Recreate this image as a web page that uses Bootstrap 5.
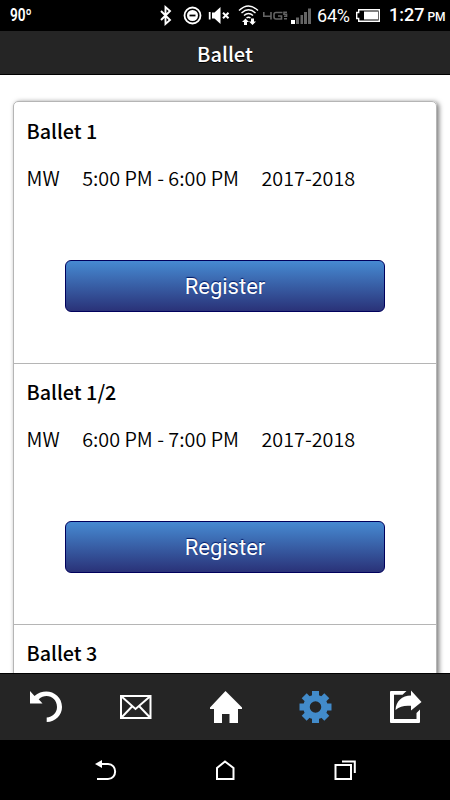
<!DOCTYPE html>
<html lang="en">
<head>
<meta charset="utf-8">
<meta name="viewport" content="width=device-width, initial-scale=1">
<title>Ballet</title>
<link href="https://cdn.jsdelivr.net/npm/bootstrap@5.3.0/dist/css/bootstrap.min.css" rel="stylesheet">
<style>
body{height:800px;font-family:"Noto Sans CJK JP","Noto Sans CJK SC",sans-serif;color:#000;background:#fff}
.status{height:31px;background:#000;color:#fff;font-family:Roboto,sans-serif;padding:0 6px 0 10px}
.status svg{display:block;flex:none}
.temp{font-size:17.5px;font-weight:600;width:24px;line-height:33px}
.temp span{display:inline-block;transform:scaleX(.78);transform-origin:left}
.pct{font-size:18px;line-height:33px;width:38px;letter-spacing:-.2px}
.clock{font-size:18px;line-height:35px;font-weight:500;width:55px;white-space:nowrap}
.clock small{font-size:12px;margin-left:3px}
.titlebar{height:44px;background:#252525;border-bottom:1px solid #000;color:#fff;font-size:20px;font-weight:500;line-height:1;text-shadow:0 1px 0 #000}
.titlebar span{padding-top:3px}
.content-area{height:598px;padding:26px 13px 0 13px}
.class-list{border:1px solid #b5b5b5;border-radius:5px;box-shadow:2px 1px 5px #777;height:700px}
.class-item{height:261px;padding:12px 12.5px 0;border-bottom:1px solid #b5b5b5}
.class-item:first-child{height:262px;padding-top:13px}
.class-item h2{font-size:19.8px;font-weight:500;line-height:32px;margin:0 0 15px}
.meta{font-size:19.8px;font-weight:350;line-height:32px;gap:22.500px;white-space:nowrap}
.btn-register{width:320px;height:52px;margin-top:66px;border:1px solid #00005c;border-radius:6px;background:linear-gradient(#468ad2,#2a3278);color:#fff;font:400 22px/48px Roboto,sans-serif;padding:1px 0 0;text-shadow:0 -1px 1px #001a66}
.toolbar{height:67px;background:#252525;border-top:1px solid #000}
.sysbar{height:60px;background:#000}
.toolbar svg,.sysbar svg{display:block}
</style>
<script src="https://cdn.jsdelivr.net/npm/bootstrap@5.3.0/dist/js/bootstrap.bundle.min.js"></script>
</head>
<body class="d-flex flex-column overflow-hidden">
<div class="status d-flex align-items-center flex-shrink-0">
<div class="temp"><span>90º</span></div>
<svg class="ms-auto" width="155" height="31" viewBox="157 0 155 31" fill="none" stroke="#fff">
<path d="M160 11l9 9-4.500 4V7l4.500 4-9 9" stroke-width="1.900"/>
<circle cx="191.500" cy="15.500" r="8" stroke-width="1.800"/><circle cx="191.500" cy="15.500" r="5.500" fill="#fff" stroke="none"/><path d="M188.500 15.500h6" stroke="#000" stroke-width="1.800"/>
<path d="M208.700 12v7.500" stroke-width="1.800"/><path d="M211 12.500h2.500l6-5.500v17l-6-5.500H211z" fill="#fff" stroke="none"/><path d="M222 12.800l5.500 5.500m0-5.500l-5.500 5.500" stroke-width="2"/>
<path d="M238 10.500q9.500-9 19 0M240.500 13q7-6.500 14 0M243 15.500q4.500-4 9 0M245.500 18q2-1.600 4 0" stroke-width="1.400"/>
<path d="M241 22l3.500-3.500 3.500 3.500h-2v3h-3v-3zM248 21.500h2v-3h3v3h2l-3.500 3.500z" fill="#fff" stroke="none"/>
<path d="M262.800 12v4.300h7.700M270 12v7.500M281.500 12.500H275q-2 0-2 2v2.500q0 2 2 2h5.500v-3H277M286 12.300h-3v2h2.500v2h-2.500M286 18.800h-3" stroke="#646464" stroke-width="1.600"/>
<path d="M290 20h4v4h-4z" fill="#fff" stroke="none"/><path d="M295 17.500h3v6.500h-3zM299.500 15h2.500v9h-2.500zM303 12h3v12h-3zM307 8.500h3V24h-3z" fill="#646464" stroke="none"/>
</svg>
<div class="pct ms-1"><span>64%</span></div>
<svg width="26" height="31" viewBox="354 0 26 31"><path d="M357.700 9.700h20.600v11.600h-20.600v-2.800h-2v-6h2z" fill="none" stroke="#fff" stroke-width="1.400"/><path d="M363 11.500h14v8h-14z" fill="#fff"/></svg>
<div class="clock ms-2">1:27<small>PM</small></div>
</div>
<header class="titlebar d-flex justify-content-center align-items-center flex-shrink-0"><span>Ballet</span></header>
<main class="content-area overflow-hidden flex-shrink-0">
<div class="class-list">
<section class="class-item"><h2>Ballet 1</h2><div class="meta d-flex"><span>MW</span><span>5:00 PM - 6:00 PM</span><span>2017-2018</span></div><div class="text-center"><button class="btn btn-register">Register</button></div></section>
<section class="class-item"><h2>Ballet 1/2</h2><div class="meta d-flex"><span>MW</span><span>6:00 PM - 7:00 PM</span><span>2017-2018</span></div><div class="text-center"><button class="btn btn-register">Register</button></div></section>
<section class="class-item border-0"><h2>Ballet 3</h2></section>
</div>
</main>
<nav class="toolbar row g-0 flex-shrink-0" aria-label="Tools">
<div class="col"><svg width="90" height="66" viewBox="0 674 90 66"><path d="M30 691v12.500h12.500l-3.800-4.200C46 692.500 57 697 57 707c0 6-4.500 10-10.300 10.500v4.500C55.500 722 62 715 62 707c0-14.500-17-20.500-27.500-11z" fill="#fff"/></svg></div>
<div class="col"><svg width="90" height="66" viewBox="90 674 90 66"><path d="M121 696h29.500v22H121zM121 696l14.500 13 15-13M121 718l11.500-12M150.500 718L139 706" fill="none" stroke="#fff" stroke-width="2"/></svg></div>
<div class="col"><svg width="90" height="66" viewBox="180 674 90 66"><path d="M225.500 691L242 707.500V709h-4v14h-8.500v-9H222v9h-8v-14h-4v-1.500z" fill="#fff"/></svg></div>
<div class="col"><svg width="90" height="66" viewBox="270 674 90 66"><g transform="translate(315.500 707)" fill="#428bca"><circle r="9" fill="none" stroke="#428bca" stroke-width="6.500"/><path id="tooth" d="M-3.500-16h7v6h-7z"/><use href="#tooth" transform="rotate(45)"/><use href="#tooth" transform="rotate(90)"/><use href="#tooth" transform="rotate(135)"/><use href="#tooth" transform="rotate(180)"/><use href="#tooth" transform="rotate(225)"/><use href="#tooth" transform="rotate(270)"/><use href="#tooth" transform="rotate(315)"/></g></svg></div>
<div class="col"><svg width="90" height="66" viewBox="360 674 90 66" fill="#fff"><path d="M391 691h15.500l-4 3.800H394V719h22.500v-6l3.500-3.500V722q0 1-1 1h-28q-1 0-1-1v-30q0-1 1-1z"/><path d="M395.500 710c.5-9 6.500-14.500 15.500-14.500v-5l10.500 11.500-10.500 8.500v-4.700c-7-.5-11 .5-15.500 4.200z"/></svg></div>
</nav>
<div class="sysbar d-flex justify-content-center flex-shrink-0">
<svg width="450" height="60" viewBox="0 740 450 60" fill="none" stroke="#fff" stroke-width="2"><path d="M98 764h10c9.500 0 9.500 15 0 15H97"/><path d="M95 764l7-4v8z" fill="#fff" stroke="none"/><path d="M225 761.500l-8 6.500v11h16.500v-11z"/><path d="M335.500 765H351v14h-15.500zM342 761.500h12.800V773"/></svg>
</div>
</body>
</html>
